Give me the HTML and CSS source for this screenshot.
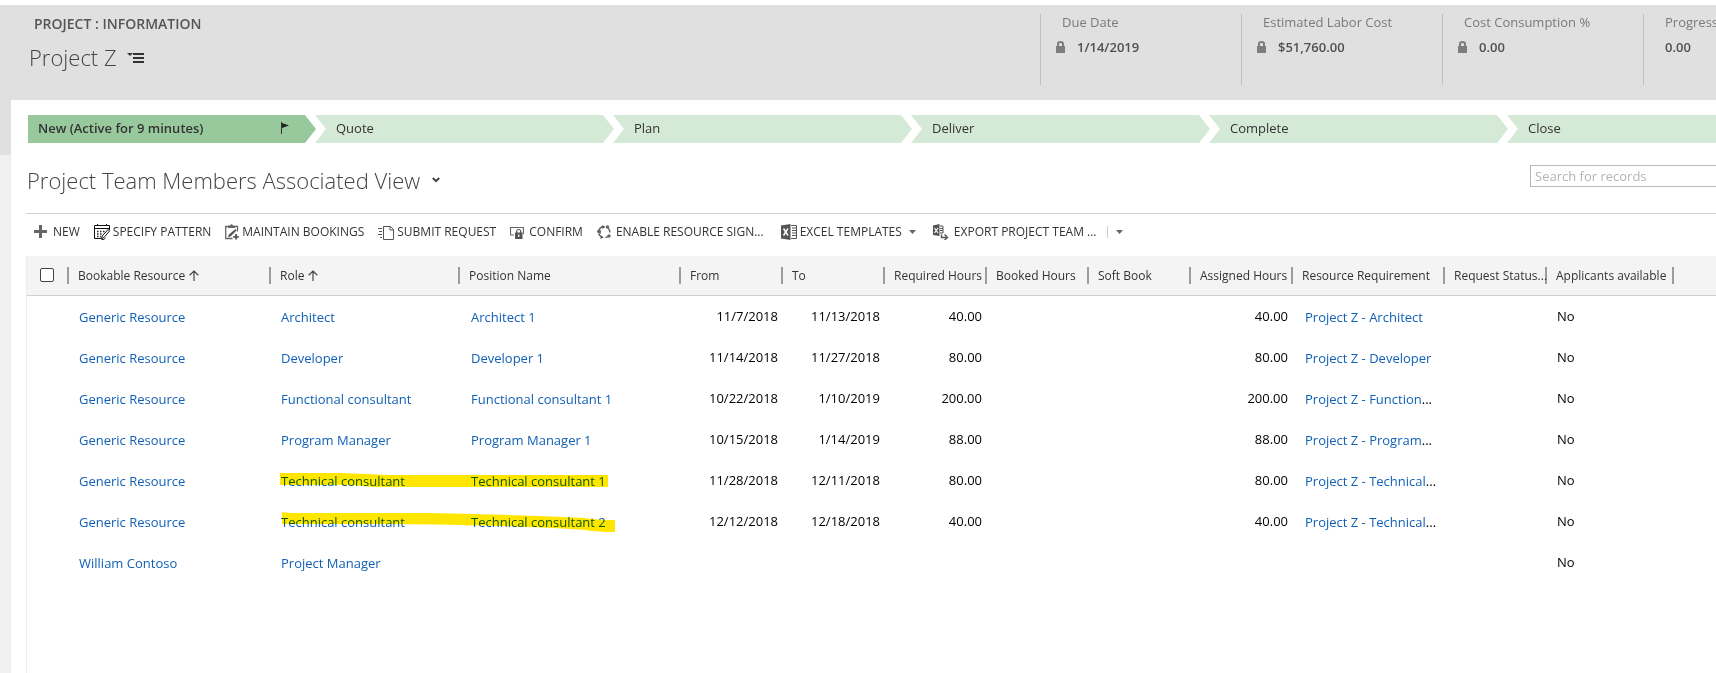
FILE: index.html
```html
<!DOCTYPE html>
<html lang="en">
<head>
<meta charset="utf-8">
<title>Project Z</title>
<link rel="stylesheet" href="styles.css">
</head>
<body>
<header class="header">
  <div class="heading">
    <div class="entity">PROJECT : INFORMATION</div>
    <div class="record">
      <h1 class="title">Project Z</h1>
      <button class="icon-btn" aria-label="Form selector">
        <svg width="18" height="14" viewBox="0 0 18 14"><path d="M0 3h6L3 6z" fill="#333"/><path d="M6 3h11v2H6zM6 7h11v2H6zM6 11h11v2H6z" fill="#333"/></svg>
      </button>
    </div>
  </div>
  <dl class="fields">
    <div class="field"><dt>Due Date</dt><dd><svg class="lock" width="9" height="12" viewBox="0 0 9 12"><path d="M1 5V2.500Q1 0 4.500 0T8 2.500V5H9v7H0V5zM3 5h3V3Q6 2 4.500 2T3 3z" fill="#7d7d80"/></svg>1/14/2019</dd></div>
    <div class="field"><dt>Estimated Labor Cost</dt><dd><svg class="lock" width="9" height="12" viewBox="0 0 9 12"><path d="M1 5V2.500Q1 0 4.500 0T8 2.500V5H9v7H0V5zM3 5h3V3Q6 2 4.500 2T3 3z" fill="#7d7d80"/></svg>$51,760.00</dd></div>
    <div class="field"><dt>Cost Consumption %</dt><dd><svg class="lock" width="9" height="12" viewBox="0 0 9 12"><path d="M1 5V2.500Q1 0 4.500 0T8 2.500V5H9v7H0V5zM3 5h3V3Q6 2 4.500 2T3 3z" fill="#7d7d80"/></svg>0.00</dd></div>
    <div class="field field-last"><dt>Progress</dt><dd>0.00</dd></div>
  </dl>
</header>
<div class="body">
  <div class="rail"></div>
  <main class="content">
    <ol class="stages">
      <li class="stage stage-active">New (Active for 9 minutes)<svg width="8" height="12" viewBox="0 0 8 12"><path d="M0 0h1v12H0z" fill="#333"/><path d="M1 1l7 2.500L1 6z" fill="#222"/></svg></li>
      <li class="stage">Quote</li>
      <li class="stage">Plan</li>
      <li class="stage">Deliver</li>
      <li class="stage">Complete</li>
      <li class="stage">Close</li>
    </ol>
    <div class="view-bar">
      <h2 class="title">Project Team Members Associated View</h2>
      <button class="icon-btn" aria-label="Change view"><svg width="8" height="6" viewBox="0 0 8 6"><path d="M.8 1L4 4.200 7.200 1" fill="none" stroke="#444" stroke-width="2"/></svg></button>
      <input class="search" type="search" aria-label="Search for records" placeholder="Search for records">
    </div>
    <div class="toolbar">
      <button class="cmd cmd-new"><svg width="14" height="14" viewBox="0 0 14 14"><path d="M5 0h3v5h5v3H8v5H5V8H0V5h5z" fill="#666"/></svg>NEW</button>
      <button class="cmd"><svg width="16" height="16" viewBox="0 0 16 16" fill="none"><path d="M.5 1.500h15v3H.5zM.5 4v10.500h7M3.500 0v2M12.500 0v2M15.500 4v2" stroke="#111"/><path d="M3 7.500h8M3 10h6M3 12.500h4" stroke="#222" stroke-width="1.300" stroke-dasharray="1.500 1.500"/><path d="M14 5.500l1.500 1.500-5.500 6.500-2.500 1.200.700-2.700z" fill="#fff" stroke="#111"/><path d="M7.500 15.500h2l2-1.500" stroke="#111"/></svg>SPECIFY PATTERN</button>
      <button class="cmd"><svg width="14" height="16" viewBox="0 0 14 16" fill="none"><path d="M7.500 14.500H.7V2.500H3M10 2.500h2.500v5" stroke="#666" stroke-width="1.300"/><path d="M3 1.500h2Q6.500-1 8 1.500h2V4H3z" fill="#666"/><path d="M10.500 5l1 1.500-6 6-2.500.7.700-2.500z" fill="#555"/><path d="M11 10v5.500M8.200 12.800h5.600" stroke="#555" stroke-width="1.800"/></svg>MAINTAIN BOOKINGS</button>
      <button class="cmd"><svg width="16" height="15" viewBox="0 0 16 15" fill="none"><path d="M5.500 1.500h7l3 3v10h-10zM12 1.500v3.500h3.500" stroke="#555"/><path d="M0 3.500h4M1 6.500h3M0 9.500h4M2 12.500h2" stroke="#555"/></svg>SUBMIT REQUEST</button>
      <button class="cmd cmd-wide"><svg width="14" height="13" viewBox="0 0 14 13" fill="none"><path d="M4 9H.5V1.500h13V8" stroke="#666" stroke-width="1.200"/><path d="M6.700 7V5.500a2 2 0 0 1 4 0V7" stroke="#555" stroke-width="1.200"/><path d="M5 6.500h7.500V13H5z" fill="#555"/><path d="M8.200 8.500h1.200v2.500H8.200z" fill="#fff"/></svg>CONFIRM</button>
      <button class="cmd cmd-wide"><svg width="14" height="14" viewBox="0 0 14 14" fill="none"><path d="M6.500 1.500A5.500 5.500 0 0 0 2 5M1.500 8.500A5.500 5.500 0 0 0 5 12M8.500 12.500a5.500 5.500 0 0 0 3.500-2M12.800 7.500A5.500 5.500 0 0 0 11 3" stroke="#666" stroke-width="1.500"/><path d="M5 .2L8.500 1.800 5.500 4zM.2 7l4-1.500L3.500 9zM3.500 10.500l3.500 2-3.500 1.300z" fill="#555"/><circle cx="10.500" cy="2" r="1.800" fill="#666"/><circle cx="1.900" cy="6.300" r="1.800" fill="#666"/><circle cx="12" cy="11" r="1.700" fill="#666"/></svg>ENABLE RESOURCE SIGN...</button>
      <button class="cmd cmd-menu"><svg width="16" height="16" viewBox="0 0 16 16" fill="none"><path d="M0 1.500L9.500 0v16L0 14.500z" fill="#555"/><path d="M10 1.500h5.500v13H10" stroke="#555"/><path d="M11 4h4M11 6.500h4M11 9h4M11 11.500h4" stroke="#555" stroke-width="1.200"/><path d="M2.500 4.500l4.500 7M7 4.500l-4.500 7" stroke="#fff" stroke-width="1.500"/></svg>EXCEL TEMPLATES<svg class="caret" width="7" height="4" viewBox="0 0 7 4"><path d="M0 0h7L3.500 4z" fill="#666"/></svg></button>
      <button class="cmd cmd-wide"><svg width="16" height="16" viewBox="0 0 16 16" fill="none"><path d="M0 1.500L6.500 0v12L0 11z" fill="#555"/><path d="M7 2h3v7H7M7 4.500h3M7 6.500h3" stroke="#555"/><path d="M1.500 4l3.500 5M5 4L1.500 9" stroke="#fff" stroke-width="1.200"/><path d="M8.500 10.500v3h5" stroke="#555" stroke-width="1.400"/><path d="M11.500 10.500l3 3-3 2.500" stroke="#555" stroke-width="1.400"/></svg>EXPORT PROJECT TEAM ...</button>
      <button class="more" aria-label="More export options"><svg width="7" height="4" viewBox="0 0 7 4"><path d="M0 0h7L3.500 4z" fill="#666"/></svg></button>
    </div>
    <div class="grid">
      <table>
        <colgroup><col class="c-check"><col class="c-resource"><col class="c-role"><col class="c-position"><col span="6" class="c-std"><col class="c-req"><col class="c-std"><col class="c-app"><col></colgroup>
        <thead>
          <tr>
            <th><input class="check" type="checkbox" aria-label="Select all"></th>
            <th><span class="h">Bookable Resource <svg width="10" height="11" viewBox="0 0 10 11"><path d="M5 11V1M.7 5.200L5 1l4.300 4.200" fill="none" stroke="#444" stroke-width="1.200"/></svg></span></th>
            <th><span class="h">Role <svg width="10" height="11" viewBox="0 0 10 11"><path d="M5 11V1M.7 5.200L5 1l4.300 4.200" fill="none" stroke="#444" stroke-width="1.200"/></svg></span></th>
            <th><span class="h">Position Name</span></th>
            <th><span class="h">From</span></th>
            <th><span class="h">To</span></th>
            <th><span class="h">Required Hours</span></th>
            <th><span class="h">Booked Hours</span></th>
            <th><span class="h">Soft Book</span></th>
            <th><span class="h">Assigned Hours</span></th>
            <th><span class="h">Resource Requirement</span></th>
            <th><span class="h">Request Status...</span></th>
            <th><span class="h">Applicants available</span></th>
            <th><span class="h"></span></th>
          </tr>
        </thead>
        <tbody>
          <tr><td></td><td><a href="#">Generic Resource</a></td><td><a href="#">Architect</a></td><td><a href="#">Architect 1</a></td><td class="n">11/7/2018</td><td class="n">11/13/2018</td><td class="n">40.00</td><td></td><td></td><td class="n">40.00</td><td><a href="#">Project Z - Architect</a></td><td></td><td class="t">No</td><td></td></tr>
          <tr><td></td><td><a href="#">Generic Resource</a></td><td><a href="#">Developer</a></td><td><a href="#">Developer 1</a></td><td class="n">11/14/2018</td><td class="n">11/27/2018</td><td class="n">80.00</td><td></td><td></td><td class="n">80.00</td><td><a href="#">Project Z - Developer</a></td><td></td><td class="t">No</td><td></td></tr>
          <tr><td></td><td><a href="#">Generic Resource</a></td><td><a href="#">Functional consultant</a></td><td><a href="#">Functional consultant 1</a></td><td class="n">10/22/2018</td><td class="n">1/10/2019</td><td class="n">200.00</td><td></td><td></td><td class="n">200.00</td><td><a href="#">Project Z - Function</a>...</td><td></td><td class="t">No</td><td></td></tr>
          <tr><td></td><td><a href="#">Generic Resource</a></td><td><a href="#">Program Manager</a></td><td><a href="#">Program Manager 1</a></td><td class="n">10/15/2018</td><td class="n">1/14/2019</td><td class="n">88.00</td><td></td><td></td><td class="n">88.00</td><td><a href="#">Project Z - Program</a>...</td><td></td><td class="t">No</td><td></td></tr>
          <tr><td></td><td><a href="#">Generic Resource</a></td><td><a href="#">Technical consultant</a></td><td><a href="#">Technical consultant 1</a></td><td class="n">11/28/2018</td><td class="n">12/11/2018</td><td class="n">80.00</td><td></td><td></td><td class="n">80.00</td><td><a href="#">Project Z - Technical</a>...</td><td></td><td class="t">No</td><td></td></tr>
          <tr><td></td><td><a href="#">Generic Resource</a></td><td><a href="#">Technical consultant</a></td><td><a href="#">Technical consultant 2</a></td><td class="n">12/12/2018</td><td class="n">12/18/2018</td><td class="n">40.00</td><td></td><td></td><td class="n">40.00</td><td><a href="#">Project Z - Technical</a>...</td><td></td><td class="t">No</td><td></td></tr>
          <tr><td></td><td><a href="#">William Contoso</a></td><td><a href="#">Project Manager</a></td><td></td><td></td><td></td><td></td><td></td><td></td><td></td><td></td><td></td><td class="t">No</td><td></td></tr>
        </tbody>
      </table>
      <svg class="marker" width="336" height="60" viewBox="0 0 336 60"><path d="M0 0H60Q85 1 110 2H328V14H95Q75 12 60 12H0z" fill="#ffe600"/><path d="M2 39L10 40H150Q250 42 305 45Q318 47 335 47V59Q318 59 305 57Q265 54 220 53Q150 51 100 51H2z" fill="#ffe600"/></svg>
    </div>
  </main>
</div>
</body>
</html>
```
FILE: styles.css
```css
* { box-sizing: border-box; }
body {
  margin: 0;
  padding-top: 5px;
  min-height: 100vh;
  display: flex;
  flex-direction: column;
  overflow: hidden;
  background: #fff;
  color: #000;
  font: 13px/20px "Open Sans", "Noto Sans", sans-serif;
}
button { border: 0; padding: 0; background: none; font: inherit; color: inherit; }
svg { flex: none; }
h1, h2, dl, dd, ol { margin: 0; padding: 0; }

.header { display: flex; justify-content: space-between; height: 95px; background: #e0e0e0; overflow: hidden; }
.heading { padding: 9px 0 0 29px; }
.entity { padding-left: 5px; font-size: 14px; font-weight: 600; color: #555; }
.record, .view-bar { display: flex; align-items: center; }
.record { height: 46px; gap: 10px; }
.title { font-size: 22px; line-height: 32px; font-weight: 300; color: #444; white-space: nowrap; }
.icon-btn { display: flex; }
.fields { display: flex; padding-top: 9px; }
.field { flex: none; width: 201px; height: 71px; padding-left: 15px; border-left: 1px solid #c0c0c0; white-space: nowrap; }
.field dt { padding-left: 6px; line-height: 16px; color: #7a7a7a; }
.field dd { display: flex; align-items: center; gap: 12px; padding-top: 8px; line-height: 18px; font-weight: 600; color: #505050; }
.field-last { width: 73px; }
.field-last dd { padding-left: 6px; }

.body { flex: 1; display: flex; }
.rail { flex: none; width: 11px; background: linear-gradient(#e0e0e0 55px, #f0f0f0 55px); }
.content { flex: 1; min-width: 0; padding: 15px 0 0 15px; display: flex; flex-direction: column; overflow: hidden; }

.stages { display: flex; list-style: none; padding-left: 2px; }
.stage {
  flex: none;
  width: 299px;
  height: 28px;
  margin-right: -1px;
  padding: 0 27px 2px 21px;
  display: flex;
  align-items: center;
  justify-content: space-between;
  background: #d4e9d6;
  color: #333;
  line-height: 26px;
  clip-path: polygon(0 0, calc(100% - 11px) 0, 100% 50%, calc(100% - 11px) 100%, 0 100%, 11px 50%);
}
.stage-active {
  width: 288px;
  padding-left: 10px;
  background: #98c99c;
  font-weight: 600;
  clip-path: polygon(0 0, calc(100% - 11px) 0, 100% 50%, calc(100% - 11px) 100%, 0 100%);
}

.view-bar { height: 71px; padding: 4px 0 0 1px; gap: 12px; border-bottom: 1px solid #d0d0d0; }
.search { width: 200px; height: 22px; margin: 0 -14px 9px auto; padding: 0 4px; border: 1px solid #b8b8b8; border-radius: 0; font: inherit; background: #fff; appearance: none; }
.search::placeholder { color: #b4b4b4; opacity: 1; }

.toolbar { display: flex; align-items: center; height: 36px; margin-bottom: 6px; padding-left: 8px; gap: 14px; font-size: 12px; color: #333; }
.cmd { display: flex; align-items: center; gap: 3px; white-space: nowrap; }
.cmd-new, .cmd-wide { gap: 5px; }
.cmd-menu { padding: 0 3px; }
.caret { margin-left: 4px; }
.more { display: flex; align-items: center; height: 12px; margin-left: -4px; padding-left: 8px; border-left: 1px solid #ccc; }

.grid { flex: 1; position: relative; border-left: 1px solid #ececec; }
table { width: 100%; table-layout: fixed; border-collapse: separate; border-spacing: 0; }
.c-check { width: 40px; }
.c-resource { width: 202px; }
.c-role { width: 189px; }
.c-position { width: 221px; }
.c-std { width: 102px; }
.c-req { width: 152px; }
.c-app { width: 127px; }
th { height: 40px; padding: 0; background: #f4f4f4; border-bottom: 1px solid #d0d0d0; text-align: left; font-size: 12px; font-weight: 400; color: #333; white-space: nowrap; }
.h { display: flex; align-items: center; gap: 4px; height: 17px; padding-left: 9px; border-left: 2px solid #9c9c9c; }
.check { display: block; width: 14px; height: 14px; margin: 0 0 2px 13px; appearance: none; border: 1px solid #444; border-radius: 2px; background: #fff; }
td { height: 41px; padding: 0 0 0 12px; white-space: nowrap; }
td.n { padding: 0 3px 2px 0; text-align: right; }
td.t { padding-bottom: 2px; }
td:nth-child(4) { padding-left: 13px; }
td:nth-child(11) { padding-left: 14px; }
a { color: #1160b7; text-decoration: none; }
.marker { position: absolute; left: 253px; top: 217px; mix-blend-mode: multiply; pointer-events: none; }
```
